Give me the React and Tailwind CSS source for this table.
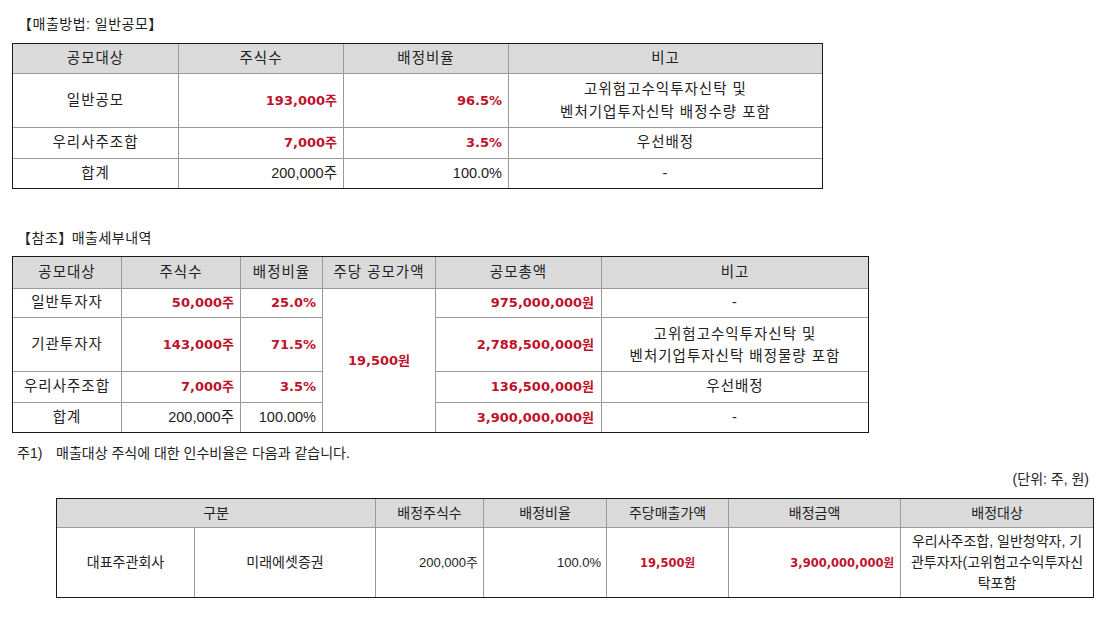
const base = { fontFamily: '"Liberation Sans", "Noto Sans CJK KR", sans-serif' };

function Title({ children, className = '' }) {
  return (
    <div className={`h-[20px] leading-[20px] text-[14px] tracking-[0.5px] text-[#222] ${className}`}>{children}</div>
  );
}

function Red({ children, small }) {
  return (
    <span
      className={`font-bold tracking-normal text-[#c0122c] ${small ? 'text-[11.5px]' : 'text-[13px]'}`}
      style={{ fontFamily: '"DejaVu Sans", "Noto Sans CJK KR", sans-serif' }}
    >
      {children}
    </span>
  );
}

// cell border helpers: inner lines are gray, outer frame comes from wrapper
const th = 'bg-[#dadada] font-normal text-center align-middle border-[#9a9a9a]';
const td = 'align-middle border-[#9a9a9a]';
const num = 'text-right tracking-normal';

export default function App() {
  return (
    <div className="w-[1115px] h-[618px] bg-white text-[14.5px] tracking-[1px] text-[#222] pt-[14px]" style={base}>
      <Title className="ml-[18px]">【매출방법: 일반공모】</Title>

      {/* 일반공모 */}
      <div className="ml-[12px] mt-[9px] w-[811px] border border-[#1a1a1a]">
        <table className="w-full table-fixed border-separate border-spacing-0">
          <colgroup>
            <col className="w-[166px]" />
            <col className="w-[165px]" />
            <col className="w-[165px]" />
            <col className="w-[313px]" />
          </colgroup>
          <thead>
            <tr className="h-[30px]">
              <th className={`${th} border-r border-b`}>공모대상</th>
              <th className={`${th} border-r border-b`}>주식수</th>
              <th className={`${th} border-r border-b`}>배정비율</th>
              <th className={`${th} border-b`}>비고</th>
            </tr>
          </thead>
          <tbody>
            <tr className="h-[54px]">
              <td className={`${td} border-r border-b text-center`}>일반공모</td>
              <td className={`${td} ${num} border-r border-b pr-[6px]`}><Red>193,000주</Red></td>
              <td className={`${td} ${num} border-r border-b pr-[6px]`}><Red>96.5%</Red></td>
              <td className={`${td} border-b text-center leading-[23px]`}>
                고위험고수익투자신탁 및<br />벤처기업투자신탁 배정수량 포함
              </td>
            </tr>
            <tr className="h-[31px]">
              <td className={`${td} border-r border-b text-center`}>우리사주조합</td>
              <td className={`${td} ${num} border-r border-b pr-[6px]`}><Red>7,000주</Red></td>
              <td className={`${td} ${num} border-r border-b pr-[6px]`}><Red>3.5%</Red></td>
              <td className={`${td} border-b text-center`}>우선배정</td>
            </tr>
            <tr className="h-[29px]">
              <td className={`${td} border-r text-center`}>합계</td>
              <td className={`${td} ${num} border-r pr-[6px]`}>200,000주</td>
              <td className={`${td} ${num} border-r pr-[6px]`}>100.0%</td>
              <td className={`${td} text-center`}>-</td>
            </tr>
          </tbody>
        </table>
      </div>

      <Title className="ml-[17px] mt-[39px]">
        【참조<span className="tracking-[-5px]">】</span> 매출세부내역
      </Title>

      {/* 매출세부내역 */}
      <div className="ml-[12px] mt-[8px] w-[857px] border border-[#1a1a1a]">
        <table className="w-full table-fixed border-separate border-spacing-0">
          <colgroup>
            <col className="w-[109px]" />
            <col className="w-[119px]" />
            <col className="w-[82px]" />
            <col className="w-[113px]" />
            <col className="w-[166px]" />
            <col className="w-[266px]" />
          </colgroup>
          <thead>
            <tr className="h-[32px]">
              <th className={`${th} border-r border-b`}>공모대상</th>
              <th className={`${th} border-r border-b`}>주식수</th>
              <th className={`${th} border-r border-b`}>배정비율</th>
              <th className={`${th} border-r border-b`}>주당 공모가액</th>
              <th className={`${th} border-r border-b`}>공모총액</th>
              <th className={`${th} border-b`}>비고</th>
            </tr>
          </thead>
          <tbody>
            <tr className="h-[29px]">
              <td className={`${td} border-r border-b text-center`}>일반투자자</td>
              <td className={`${td} ${num} border-r border-b pr-[6px]`}><Red>50,000주</Red></td>
              <td className={`${td} ${num} border-r border-b pr-[6px]`}><Red>25.0%</Red></td>
              <td rowSpan={4} className={`${td} border-r text-center`}><Red>19,500원</Red></td>
              <td className={`${td} ${num} border-r border-b pr-[7px]`}><Red>975,000,000원</Red></td>
              <td className={`${td} border-b text-center`}>-</td>
            </tr>
            <tr className="h-[54px]">
              <td className={`${td} border-r border-b text-center`}>기관투자자</td>
              <td className={`${td} ${num} border-r border-b pr-[6px]`}><Red>143,000주</Red></td>
              <td className={`${td} ${num} border-r border-b pr-[6px]`}><Red>71.5%</Red></td>
              <td className={`${td} ${num} border-r border-b pr-[7px]`}><Red>2,788,500,000원</Red></td>
              <td className={`${td} border-b text-center leading-[22px]`}>
                고위험고수익투자신탁 및<br />벤처기업투자신탁 배정물량 포함
              </td>
            </tr>
            <tr className="h-[31px]">
              <td className={`${td} border-r border-b text-center`}>우리사주조합</td>
              <td className={`${td} ${num} border-r border-b pr-[6px]`}><Red>7,000주</Red></td>
              <td className={`${td} ${num} border-r border-b pr-[6px]`}><Red>3.5%</Red></td>
              <td className={`${td} ${num} border-r border-b pr-[7px]`}><Red>136,500,000원</Red></td>
              <td className={`${td} border-b text-center`}>우선배정</td>
            </tr>
            <tr className="h-[29px]">
              <td className={`${td} border-r text-center`}>합계</td>
              <td className={`${td} ${num} border-r pr-[6px]`}>200,000주</td>
              <td className={`${td} ${num} border-r pr-[6px]`}>100.00%</td>
              <td className={`${td} ${num} border-r pr-[7px]`}><Red>3,900,000,000원</Red></td>
              <td className={`${td} text-center`}>-</td>
            </tr>
          </tbody>
        </table>
      </div>

      <div className="mt-[10px] h-[20px] leading-[20px] text-[14px] tracking-normal flex">
        <span className="ml-[17px] w-[39px]">주1)</span>
        <span>매출대상 주식에 대한 인수비율은 다음과 같습니다.</span>
      </div>

      <div className="mt-[6px] w-[1089px] h-[20px] leading-[20px] text-[14px] tracking-normal text-right">(단위: 주, 원)</div>

      {/* 인수비율 */}
      <div className="ml-[56px] mt-[9px] w-[1038px] border border-[#1a1a1a] text-[14px] tracking-normal">
        <table className="w-full table-fixed border-separate border-spacing-0">
          <colgroup>
            <col className="w-[138px]" />
            <col className="w-[181px]" />
            <col className="w-[108px]" />
            <col className="w-[123px]" />
            <col className="w-[122px]" />
            <col className="w-[172px]" />
            <col className="w-[192px]" />
          </colgroup>
          <thead>
            <tr className="h-[29px]">
              <th colSpan={2} className={`${th} border-r border-b`}>구분</th>
              <th className={`${th} border-r border-b`}>배정주식수</th>
              <th className={`${th} border-r border-b`}>배정비율</th>
              <th className={`${th} border-r border-b`}>주당매출가액</th>
              <th className={`${th} border-r border-b`}>배정금액</th>
              <th className={`${th} border-b`}>배정대상</th>
            </tr>
          </thead>
          <tbody>
            <tr className="h-[69px]">
              <td className={`${td} border-r text-center`}>대표주관회사</td>
              <td className={`${td} border-r text-center`}>미래에셋증권</td>
              <td className={`${td} ${num} border-r pr-[5px] text-[13px]`}>200,000주</td>
              <td className={`${td} ${num} border-r pr-[5px] text-[13px]`}>100.0%</td>
              <td className={`${td} border-r text-center`}><Red small>19,500원</Red></td>
              <td className={`${td} ${num} border-r pr-[6px]`}><Red small>3,900,000,000원</Red></td>
              <td className={`${td} text-center leading-[21px]`}>
                우리사주조합, 일반청약자, 기<br />관투자자(고위험고수익투자신<br />탁포함
              </td>
            </tr>
          </tbody>
        </table>
      </div>
    </div>
  );
}
